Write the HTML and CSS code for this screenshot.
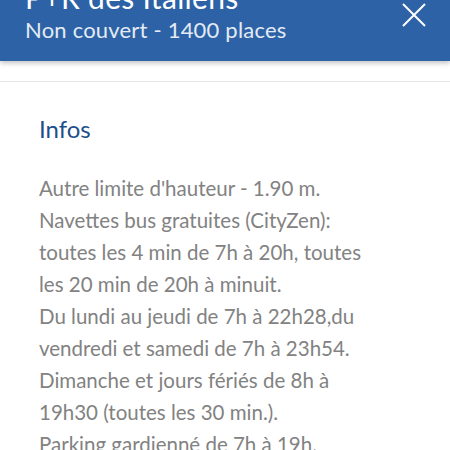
FILE: index.html
```html
<!DOCTYPE html>
<html lang="fr">
<head>
  <meta charset="UTF-8">
  <meta name="viewport" content="width=device-width, initial-scale=1.0">
  <title>P+R des Italiens</title>
  <link rel="stylesheet" href="styles.css">
</head>
<body>
  <div class="header">
    <div class="titles">
      <div class="title">P+R des Italiens</div>
      <div class="subtitle">Non couvert - 1400 places</div>
    </div>
    <button class="close" aria-label="Fermer">
      <svg width="26" height="26" viewBox="0 0 26 26">
        <path d="M2 2 L24 24 M24 2 L2 24" stroke="#fff" stroke-width="2" fill="none"/>
      </svg>
    </button>
  </div>
  <div class="strip"></div>
  <div class="content">
    <h2>Infos</h2>
    <p class="infos">Autre limite d'hauteur - 1.90 m.<br>Navettes bus gratuites (CityZen):<br>toutes les 4 min de 7h à 20h, toutes<br>les 20 min de 20h à minuit.<br>Du lundi au jeudi de 7h à 22h28,du<br>vendredi et samedi de 7h à 23h54.<br>Dimanche et jours fériés de 8h à<br>19h30 (toutes les 30 min.).<br>Parking gardienné de 7h à 19h.</p>
  </div>
</body>
</html>
```

FILE: styles.css
```css
body {
  margin: 0;
  font-family: Lato, 'Open Sans', sans-serif;
  background: #fff;
  overflow: hidden;
}
.header {
  position: relative;
  z-index: 1;
  height: 61px;
  background: #2d63a6;
  color: #fff;
  display: flex;
  justify-content: space-between;
  align-items: flex-end;
  padding: 0 23px 0 25px;
  box-shadow: 0 2px 5px rgba(0, 0, 0, 0.25);
  overflow: hidden;
}
.titles {
  padding-bottom: 18px;
}
.title {
  font-size: 30px;
  line-height: 34px;
  margin-bottom: 3px;
  letter-spacing: 0.3px;
}
.subtitle {
  font-size: 22px;
  line-height: 26px;
  letter-spacing: 0.2px;
  color: #e3ebf5;
}
.close {
  align-self: flex-start;
  margin-top: 2px;
  padding: 0;
  background: none;
  border: none;
}
.strip {
  height: 20px;
  border-bottom: 1px solid #e6e6e6;
}
.content {
  padding: 33px 39px 0;
}
h2 {
  margin: 0 0 29px;
  font-weight: normal;
  font-size: 24px;
  line-height: 28px;
  color: #1d4f8c;
}
.infos {
  margin: 0;
  font-size: 20.5px;
  line-height: 32px;
  color: #828282;
  white-space: nowrap;
}
```
